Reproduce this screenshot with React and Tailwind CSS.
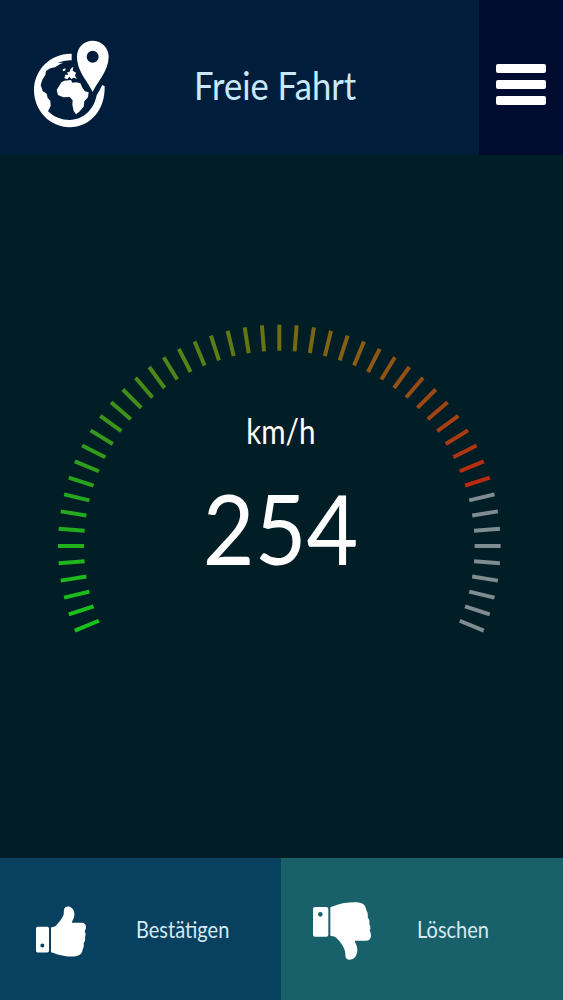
import React from 'react';

const TICK_COUNT = 51;
const ACTIVE_TICKS = 42;
const TICKS = Array.from({ length: TICK_COUNT }, (_, i) => i);

// colour stops along the active part of the gauge
const STOPS = [
    [0, [24, 196, 28]],
    [8, [36, 166, 30]],
    [15, [66, 142, 24]],
    [21, [92, 124, 22]],
    [25, [112, 110, 18]],
    [30, [138, 92, 20]],
    [36, [160, 68, 20]],
    [41, [188, 42, 16]],
];

function tickColor(index) {
    if (index >= ACTIVE_TICKS) {
        return '#7f8c90';
    }
    const next = Math.max(1, STOPS.findIndex(([pos]) => pos >= index));
    const [fromPos, from] = STOPS[next - 1];
    const [toPos, to] = STOPS[next];
    const t = (index - fromPos) / (toPos - fromPos);
    const rgb = from.map((c, k) => Math.round(c + (to[k] - c) * t));
    return `rgb(${rgb.join(',')})`;
}

function GlobeIcon() {
    return (
        <svg viewBox="0 0 300 315" className="h-[105px] w-[100px] shrink-0" fill="#fff">
            <path d="M155 71 C92 69 42 119 42 181 C42 243 91 292 149 292 C208 292 256 243 254 169 L247 165 Q237 185 230 196 C222 238 191 269 149 270 C126 270 103 262 84 244 L92 228 L91 212 L83 204 L80 191 L68 183 L62 165 L67 149 L76 135 L78 123 L91 115 L105 112 L122 101 L131 98 L112 99 Q132 90 155 91 Z" />
            <path d="M124 157 L133 152 L153 150 L157 158 L169 157 L181 160 L188 175 L195 184 L206 187 L204 202 L193 214 L191 230 L178 245 L168 253 L161 243 L157 224 L158 211 L149 201 L130 202 L114 195 L110 180 Z" />
            <path d="M133 145 L136 134 L145 134 L141 126 L148 127 L152 116 L160 110 L158 122 L168 128 L165 137 L171 146 L161 143 L154 147 L148 140 L142 148 Z" />
            <path d="M128 118 L136 115 L137 121 L129 124 Z" />
            <path
                fillRule="evenodd"
                d="M218 186 C207 158 171 126 171 80 C171 52 192 32 218 32 C245 32 266 53 266 80 C266 124 230 157 218 186 Z M218 62 A18 18 0 1 0 218 98 A18 18 0 1 0 218 62 Z"
            />
        </svg>
    );
}

function ThumbsUpIcon() {
    return (
        <svg viewBox="0 0 150 152" className="h-[51px] w-[50px]" fill="#fff">
            <path fillRule="evenodd" d="M5 62 H34 Q39 62 39 67 V133 Q39 139 34 139 H5 Q0 139 0 133 V67 Q0 62 5 62 Z M19 112 A6 6 0 1 0 19 124 A6 6 0 1 0 19 112 Z" />
            <path d="M45 64 L57 61 C66 53 79 37 83 25 L84 10 Q87 0 97 1 C111 3 116 15 115 27 C114 39 106 46 108 50 L138 50 Q149 51 150 62 Q150 70 146 76 Q151 83 147 93 Q149 105 143 112 Q145 122 140 130 C138 148 123 151 108 151 C83 151 67 145 45 138 Z" />
        </svg>
    );
}

function ThumbsDownIcon() {
    return (
        <svg viewBox="0 0 174 174" className="h-[58px] w-[58px]" fill="#fff">
            <path fillRule="evenodd" d="M6 15 H40 Q46 15 46 21 V98 Q46 104 40 104 H6 Q0 104 0 98 V21 Q0 15 6 15 Z M22 30 A7 7 0 1 0 22 44 A7 7 0 1 0 22 30 Z" />
            <path d="M52 16 C77 5 102 1 126 1 C147 1 158 7 160 25 Q166 34 164 46 Q171 54 169 67 Q175 78 170 86 Q174 91 174 101 Q173 114 161 116 L126 116 C124 122 134 130 133 145 C132 162 124 174 107 173 C96 172 98 163 96 148 C93 132 77 113 66 104 L52 101 Z" />
        </svg>
    );
}

function Header() {
    return (
        <header className="flex h-[155px] bg-[#001e3b]">
            <div className="flex w-[479px] items-start pl-5 pt-[29.5px]">
                <GlobeIcon />
                <h1 className="ml-[74px] mt-[26px] origin-left scale-x-[0.91] whitespace-nowrap text-[38px] leading-[58px] text-[#c9e9fb]">
                    Freie Fahrt
                </h1>
            </div>
            <button className="flex flex-1 flex-col gap-[7px] bg-[#000c2f] pl-[17px] pt-16">
                <span className="h-[9px] w-[50px] rounded-[2px] bg-white" />
                <span className="h-[9px] w-[50px] rounded-[2px] bg-white" />
                <span className="h-[9px] w-[50px] rounded-[2px] bg-white" />
            </button>
        </header>
    );
}

function Gauge() {
    return (
        <main className="grid flex-1 bg-[#011d25] text-white">
            <svg viewBox="0 155 563 703" className="col-start-1 row-start-1 h-[703px] w-[563px]">
                {TICKS.map((i) => (
                    <line
                        key={i}
                        x1="58"
                        y1="546"
                        x2="84"
                        y2="546"
                        strokeWidth="4"
                        stroke={tickColor(i)}
                        transform={`rotate(${(i - 5) * 4.5} 279.3 546)`}
                    />
                ))}
            </svg>
            <div className="col-start-1 row-start-1 flex flex-col items-center pr-0.5 pt-[254px]">
                <span className="scale-x-[0.87] text-[34px] leading-[44px]">km/h</span>
                <span className="mt-[17px] scale-x-[0.93] text-[96px] leading-[116px]">254</span>
            </div>
        </main>
    );
}

function Footer() {
    return (
        <footer className="flex h-[142px] text-[23px] leading-8 text-[#d5eaf3]">
            <button className="flex w-[281px] items-start bg-[#084160] pl-9 pt-12 text-left">
                <ThumbsUpIcon />
                <span className="ml-[50px] mt-[7px] origin-left scale-x-[0.87] whitespace-nowrap">Bestätigen</span>
            </button>
            <button className="flex flex-1 items-start bg-[#18616a] pl-8 pt-[44px] text-left">
                <ThumbsDownIcon />
                <span className="ml-[46px] mt-[11px] origin-left scale-x-[0.87] whitespace-nowrap">Löschen</span>
            </button>
        </footer>
    );
}

export default function App() {
    return (
        <div className="flex h-[1000px] w-[563px] flex-col overflow-hidden font-['Lato',sans-serif]">
            <Header />
            <Gauge />
            <Footer />
        </div>
    );
}
